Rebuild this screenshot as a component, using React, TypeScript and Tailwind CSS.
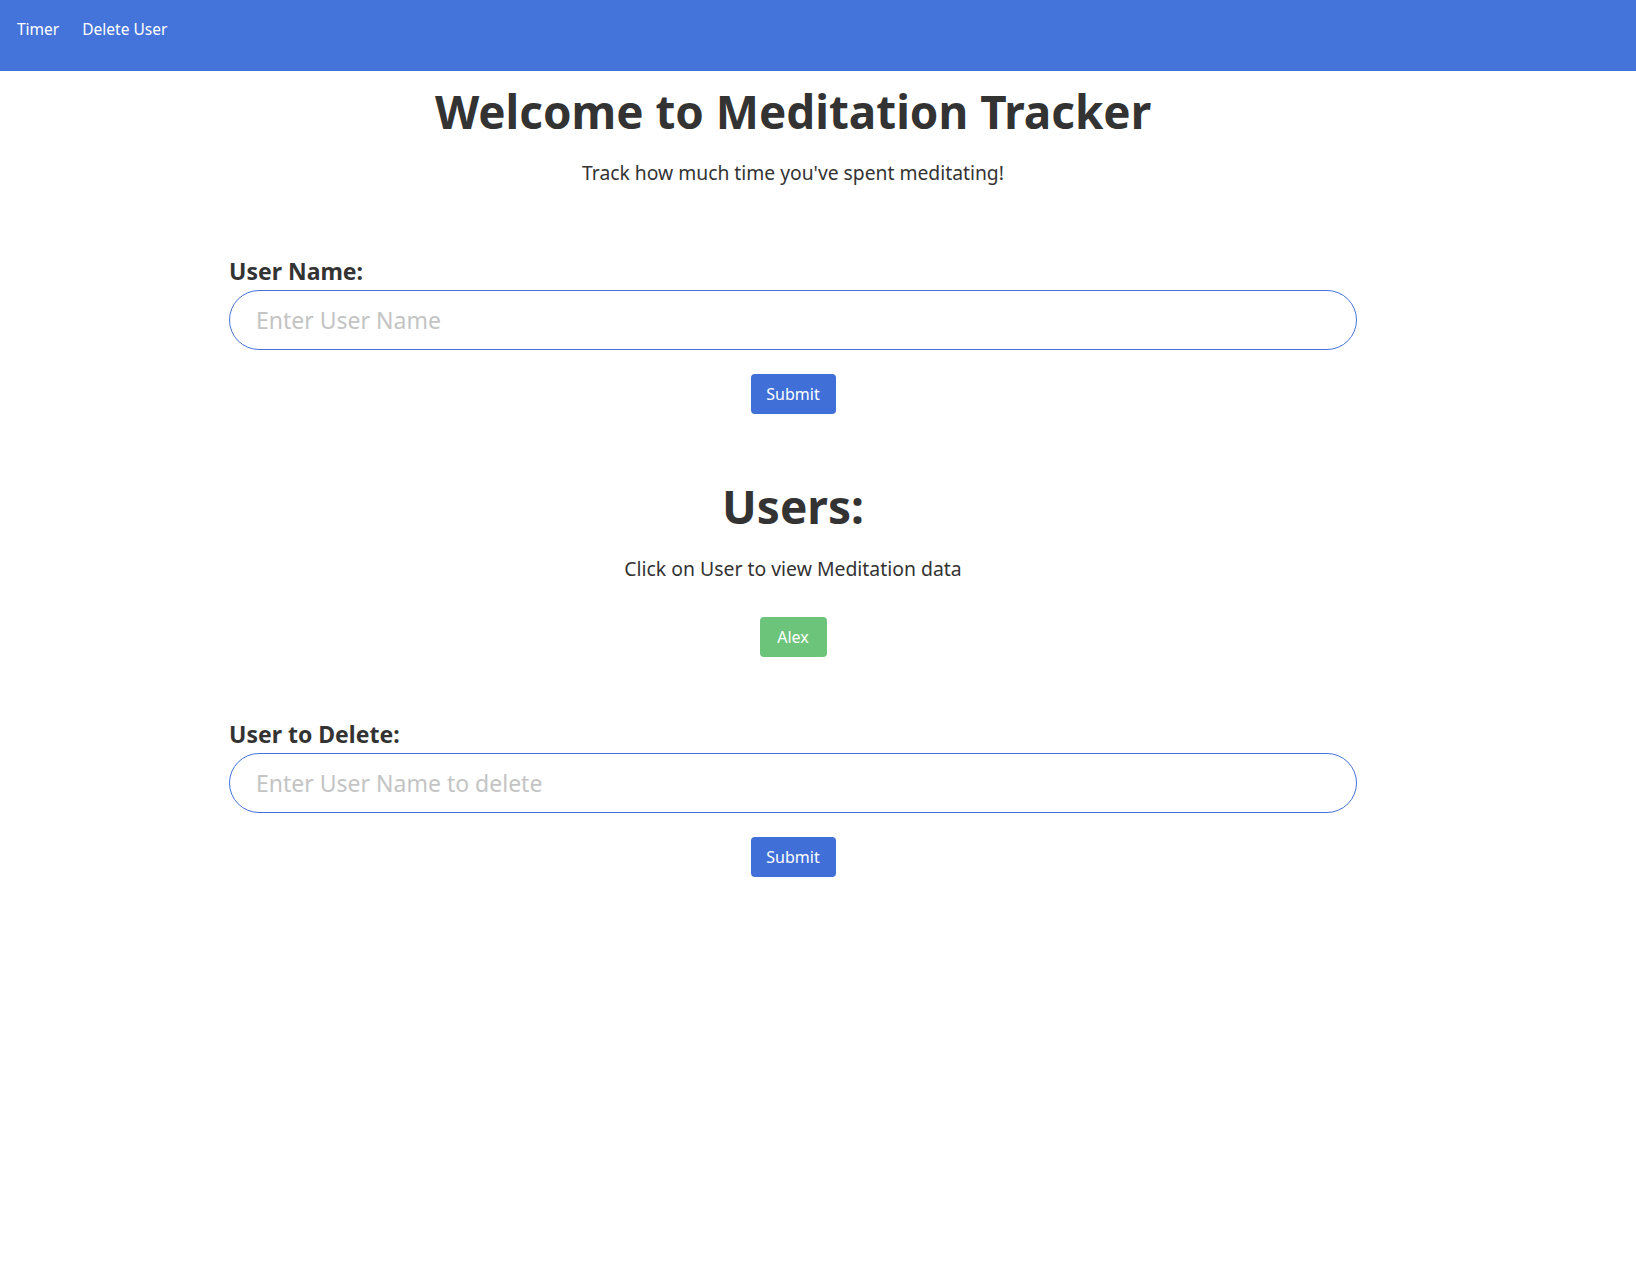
import React from "react";

export default function App() {
  const font = { fontFamily: '"Noto Sans", "Open Sans", sans-serif' };
  return (
    <div className="min-h-[1281px] bg-white text-[#333333]" style={font}>
      <nav className="h-[71px] bg-[#4473d9] flex items-start pt-[15px] pl-[17px] gap-[23px]">
        <a className="text-white text-[15.5px] leading-[28px] cursor-pointer">Timer</a>
        <a className="text-white text-[15.5px] leading-[28px] cursor-pointer">Delete User</a>
      </nav>
      <div className="w-[1586px] text-center">
        <h1 className="mt-[12px] text-[45.8px] leading-[56px] font-bold">Welcome to Meditation Tracker</h1>
        <p className="mt-[20px] text-[19.3px] leading-[28px]">Track how much time you've spent meditating!</p>

        <div className="mx-[229px] mt-[69px] text-left">
          <label className="block text-[23px] leading-[31px] font-bold">User Name:</label>
          <input
            className="mt-[3px] block w-full h-[60px] rounded-full border border-[#4473d9] px-[26px] text-[23px] outline-none placeholder:text-[#c4c4c4]"
            placeholder="Enter User Name"
          />
        </div>
        <div className="mt-[24px] flex justify-center">
          <button className="h-[40px] w-[85px] rounded-[4px] bg-[#416fd8] text-white text-[16px]">Submit</button>
        </div>

        <h2 className="mt-[64px] text-[46px] leading-[56px] font-bold">Users:</h2>
        <p className="mt-[21px] text-[19.4px] leading-[28px]">Click on User to view Meditation data</p>
        <div className="mt-[34px] flex justify-center">
          <button className="h-[40px] w-[67px] rounded-[4px] bg-[#6cc47b] text-white text-[16px]">Alex</button>
        </div>

        <div className="mx-[229px] mt-[62px] text-left">
          <label className="block text-[23px] leading-[31px] font-bold">User to Delete:</label>
          <input
            className="mt-[3px] block w-full h-[60px] rounded-full border border-[#4473d9] px-[26px] text-[23px] outline-none placeholder:text-[#c4c4c4]"
            placeholder="Enter User Name to delete"
          />
        </div>
        <div className="mt-[24px] flex justify-center">
          <button className="h-[40px] w-[85px] rounded-[4px] bg-[#416fd8] text-white text-[16px]">Submit</button>
        </div>
      </div>
    </div>
  );
}
